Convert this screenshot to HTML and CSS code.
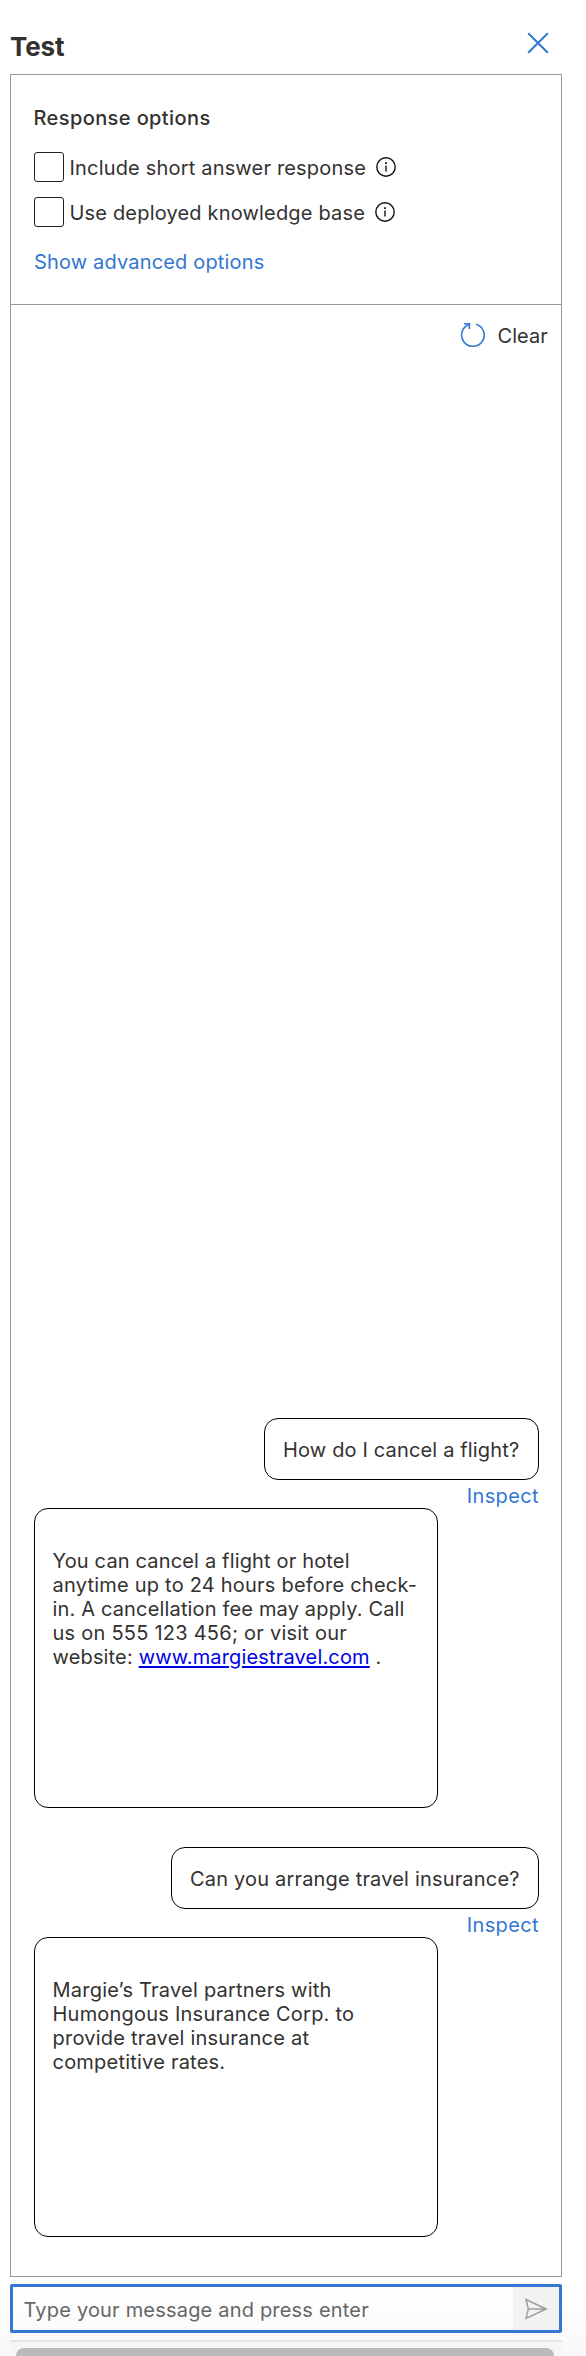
FILE: index.html
```
<!DOCTYPE html>
<html lang="en">
<head>
<meta charset="utf-8">
<title>Test</title>
<link rel="stylesheet" href="styles.css">
</head>
<body>
<div class="pane">
  <header class="header">
    <h1 class="title">Test</h1>
    <svg class="close" viewBox="0 0 22 22"><path d="M1.2 1.2 20.8 20.8M20.8 1.2 1.2 20.8"/></svg>
  </header>
  <main class="panel">
    <section class="options">
      <h2 class="options-title">Response options</h2>
      <div class="option"><span class="checkbox"></span><span class="label">Include short answer response</span>
        <svg class="info" viewBox="0 0 20 20"><circle cx="10" cy="10" r="9.2"/><path d="M10 8.5V14.5"/><path class="dot" d="M10 5.3V6.9"/></svg></div>
      <div class="option"><span class="checkbox"></span><span class="label">Use deployed knowledge base</span>
        <svg class="info" viewBox="0 0 20 20"><circle cx="10" cy="10" r="9.2"/><path d="M10 8.5V14.5"/><path class="dot" d="M10 5.3V6.9"/></svg></div>
      <a class="advanced">Show advanced options</a>
    </section>
    <section class="chat">
      <div class="clear">
        <svg class="reset" viewBox="0 0 26 26"><path d="M16.2 2.2A11.3 11.3 0 1 1 9 2.4"/><path d="M4 1.8H9.4V7"/></svg>
        <span>Clear</span>
      </div>
      <div class="messages">
        <div class="question q-flight">How do I cancel a flight?</div>
        <a class="inspect">Inspect</a>
        <div class="answer first">You can cancel a flight or hotel<br><span class="wide">anytime up to 24 hours before check-</span><br>in. A cancellation fee may apply. Call<br><span class="wider">us on 555 123 456; or visit our</span><br>website: <span class="site">www.margiestravel.com</span> .</div>
        <div class="question q-insurance">Can you arrange travel insurance?</div>
        <a class="inspect">Inspect</a>
        <div class="answer wide">Margie’s Travel partners with<br>Humongous Insurance Corp. to<br>provide travel insurance at<br>competitive rates.</div>
      </div>
    </section>
  </main>
  <div class="composer">
    <span class="placeholder">Type your message and press enter</span>
    <span class="send"><svg viewBox="0 0 24 22"><path d="M2 1.5 22.2 11 2 20.5 4.3 11ZM4.3 11H22"/></svg></span>
  </div>
  <div class="scrollbar"><div class="thumb"></div></div>
</div>
</body>
</html>
```
FILE: styles.css
```
* { box-sizing: border-box; }
body { margin: 0; background: #fff; font: 400 20px/24px Inter, "Liberation Sans", sans-serif; letter-spacing: 0.16px; color: #333231; }
h1, h2 { margin: 0; }
svg { display: block; fill: none; flex: none; }
.pane { width: 586px; height: 2356px; padding: 0 24px 0 10px; overflow: hidden; display: flex; flex-direction: column; background: linear-gradient(#fff 2290px, #f8f8f8); }
.header { height: 74px; padding: 32px 13px 0 0; display: flex; justify-content: space-between; }
.title { font-size: 26px; line-height: 30px; font-weight: 700; letter-spacing: -0.1px; }
.close { width: 22px; height: 22px; stroke: #3277d3; stroke-width: 2; }
.panel { height: 2203px; border: 1px solid #999; background: #fff; display: flex; flex-direction: column; }
.options { height: 230px; border-bottom: 1px solid #999; padding: 31px 23px 0; }
.options-title { font-size: 20px; font-weight: 500; line-height: 24px; margin: 0 0 22px -0.5px; letter-spacing: 0.4px; }
.option { display: flex; align-items: center; height: 30px; margin-bottom: 15px; }
.checkbox { width: 30px; height: 30px; border: 1px solid #222; border-radius: 3px; margin-right: 5.5px; flex: none; }
.label { padding-top: 2px; letter-spacing: 0.18px; }
.info { width: 20px; height: 20px; margin-left: 10px; stroke: #111; stroke-width: 1.4; }
.info .dot { stroke-width: 1.8; }
.advanced { display: block; margin-top: 23px; color: #3277d3; }
.chat { flex: 1; display: flex; flex-direction: column; justify-content: space-between; }
.clear { display: flex; justify-content: flex-end; padding: 17px 13px 0 0; gap: 11.5px; height: 44px; }
.clear span { margin-top: 2px; letter-spacing: 0.1px; }
.reset { width: 26px; height: 26px; stroke: #3277d3; stroke-width: 1.6; }
.messages { display: flex; flex-direction: column; padding: 0 22px 39px 23px; }
.question { align-self: flex-end; height: 62px; border: 1px solid #000; border-radius: 14px; padding: 19px 0 0 18px; white-space: nowrap; }
.q-flight { width: 275px; }
.q-insurance { width: 368px; letter-spacing: 0.18px; }
.inspect { align-self: flex-end; color: #3277d3; height: 28px; padding-top: 4px; letter-spacing: 0.38px; }
.answer { width: 404px; height: 300px; border: 1px solid #000; border-radius: 14px; padding: 40px 0 0 17.5px; white-space: nowrap; }
.first { margin-bottom: 39px; }
.wide { letter-spacing: 0.22px; }
.wider { letter-spacing: 0.24px; }
.site { color: #0000e6; text-decoration: underline; text-decoration-thickness: 2px; text-underline-offset: 2px; }
.composer { height: 49px; margin-top: 7px; border: 3px solid #3277d3; border-radius: 2px; display: flex; justify-content: space-between; }
.placeholder { padding: 11px 0 0 10.5px; color: #666; letter-spacing: 0.19px; }
.send { width: 46px; background: #f3f2f1; display: flex; align-items: center; justify-content: center; }
.send svg { width: 24px; height: 22px; stroke: #a19f9d; stroke-width: 1.5; }
.scrollbar { height: 16px; margin-top: 7px; border-top: 2px solid #e5e5e5; background: #f6f6f6; padding: 6px 8px 0 6px; }
.thumb { height: 20px; border-radius: 8px; background: #bababa; }
```
